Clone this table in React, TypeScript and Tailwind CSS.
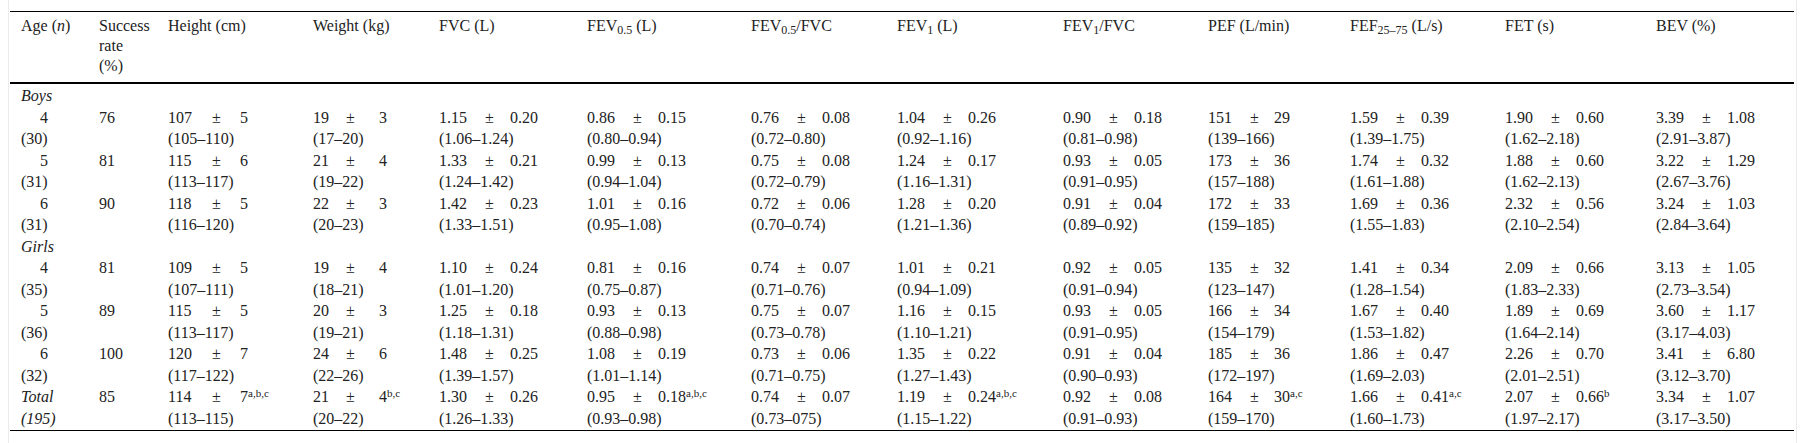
import React from "react";

type Cell = [string, string, string, string?];

const GRID =
  "grid grid-cols-[89px_69px_145px_126px_148px_164px_146px_166px_145px_142px_155px_151px_138px]";

const SUBW: [string, string][] = [
  ["w-[44px]", "w-[28px]"],
  ["w-[33px]", "w-[33px]"],
  ["w-[46px]", "w-[25px]"],
  ["w-[46px]", "w-[25px]"],
  ["w-[46px]", "w-[25px]"],
  ["w-[46px]", "w-[25px]"],
  ["w-[46px]", "w-[25px]"],
  ["w-[42px]", "w-[24px]"],
  ["w-[46px]", "w-[25px]"],
  ["w-[46px]", "w-[25px]"],
  ["w-[46px]", "w-[25px]"],
];

type Row = { age: string; n: string; rate: string; cells: Cell[]; italic?: boolean };

const boys: Row[] = [
  {
    age: "4",
    n: "(30)",
    rate: "76",
    cells: [
      ["107", "5", "(105–110)"],
      ["19", "3", "(17–20)"],
      ["1.15", "0.20", "(1.06–1.24)"],
      ["0.86", "0.15", "(0.80–0.94)"],
      ["0.76", "0.08", "(0.72–0.80)"],
      ["1.04", "0.26", "(0.92–1.16)"],
      ["0.90", "0.18", "(0.81–0.98)"],
      ["151", "29", "(139–166)"],
      ["1.59", "0.39", "(1.39–1.75)"],
      ["1.90", "0.60", "(1.62–2.18)"],
      ["3.39", "1.08", "(2.91–3.87)"],
    ],
  },
  {
    age: "5",
    n: "(31)",
    rate: "81",
    cells: [
      ["115", "6", "(113–117)"],
      ["21", "4", "(19–22)"],
      ["1.33", "0.21", "(1.24–1.42)"],
      ["0.99", "0.13", "(0.94–1.04)"],
      ["0.75", "0.08", "(0.72–0.79)"],
      ["1.24", "0.17", "(1.16–1.31)"],
      ["0.93", "0.05", "(0.91–0.95)"],
      ["173", "36", "(157–188)"],
      ["1.74", "0.32", "(1.61–1.88)"],
      ["1.88", "0.60", "(1.62–2.13)"],
      ["3.22", "1.29", "(2.67–3.76)"],
    ],
  },
  {
    age: "6",
    n: "(31)",
    rate: "90",
    cells: [
      ["118", "5", "(116–120)"],
      ["22", "3", "(20–23)"],
      ["1.42", "0.23", "(1.33–1.51)"],
      ["1.01", "0.16", "(0.95–1.08)"],
      ["0.72", "0.06", "(0.70–0.74)"],
      ["1.28", "0.20", "(1.21–1.36)"],
      ["0.91", "0.04", "(0.89–0.92)"],
      ["172", "33", "(159–185)"],
      ["1.69", "0.36", "(1.55–1.83)"],
      ["2.32", "0.56", "(2.10–2.54)"],
      ["3.24", "1.03", "(2.84–3.64)"],
    ],
  },
];

const girls: Row[] = [
  {
    age: "4",
    n: "(35)",
    rate: "81",
    cells: [
      ["109", "5", "(107–111)"],
      ["19", "4", "(18–21)"],
      ["1.10", "0.24", "(1.01–1.20)"],
      ["0.81", "0.16", "(0.75–0.87)"],
      ["0.74", "0.07", "(0.71–0.76)"],
      ["1.01", "0.21", "(0.94–1.09)"],
      ["0.92", "0.05", "(0.91–0.94)"],
      ["135", "32", "(123–147)"],
      ["1.41", "0.34", "(1.28–1.54)"],
      ["2.09", "0.66", "(1.83–2.33)"],
      ["3.13", "1.05", "(2.73–3.54)"],
    ],
  },
  {
    age: "5",
    n: "(36)",
    rate: "89",
    cells: [
      ["115", "5", "(113–117)"],
      ["20", "3", "(19–21)"],
      ["1.25", "0.18", "(1.18–1.31)"],
      ["0.93", "0.13", "(0.88–0.98)"],
      ["0.75", "0.07", "(0.73–0.78)"],
      ["1.16", "0.15", "(1.10–1.21)"],
      ["0.93", "0.05", "(0.91–0.95)"],
      ["166", "34", "(154–179)"],
      ["1.67", "0.40", "(1.53–1.82)"],
      ["1.89", "0.69", "(1.64–2.14)"],
      ["3.60", "1.17", "(3.17–4.03)"],
    ],
  },
  {
    age: "6",
    n: "(32)",
    rate: "100",
    cells: [
      ["120", "7", "(117–122)"],
      ["24", "6", "(22–26)"],
      ["1.48", "0.25", "(1.39–1.57)"],
      ["1.08", "0.19", "(1.01–1.14)"],
      ["0.73", "0.06", "(0.71–0.75)"],
      ["1.35", "0.22", "(1.27–1.43)"],
      ["0.91", "0.04", "(0.90–0.93)"],
      ["185", "36", "(172–197)"],
      ["1.86", "0.47", "(1.69–2.03)"],
      ["2.26", "0.70", "(2.01–2.51)"],
      ["3.41", "6.80", "(3.12–3.70)"],
    ],
  },
];

const total: Row = {
  age: "Total",
  n: "(195)",
  rate: "85",
  italic: true,
  cells: [
    ["114", "7", "(113–115)", "a,b,c"],
    ["21", "4", "(20–22)", "b,c"],
    ["1.30", "0.26", "(1.26–1.33)"],
    ["0.95", "0.18", "(0.93–0.98)", "a,b,c"],
    ["0.74", "0.07", "(0.73–075)"],
    ["1.19", "0.24", "(1.15–1.22)", "a,b,c"],
    ["0.92", "0.08", "(0.91–0.93)"],
    ["164", "30", "(159–170)", "a,c"],
    ["1.66", "0.41", "(1.60–1.73)", "a,c"],
    ["2.07", "0.66", "(1.97–2.17)", "b"],
    ["3.34", "1.07", "(3.17–3.50)"],
  ],
};

function DataRow({ row }: { row: Row }) {
  return (
    <div className={GRID}>
      <div className="pl-[11px]">
        {row.italic ? (
          <>
            <div className="italic">{row.age}</div>
            <div className="italic">{row.n}</div>
          </>
        ) : (
          <>
            <div className="pl-[19px]">{row.age}</div>
            <div>{row.n}</div>
          </>
        )}
      </div>
      <div>{row.rate}</div>
      {row.cells.map((c, i) => (
        <div key={i}>
          <div className="flex whitespace-nowrap">
            <span className={SUBW[i][0]}>{c[0]}</span>
            <span className={SUBW[i][1]}>±</span>
            <span>
              {c[1]}
              {c[3] ? <sup className="text-[11px]">{c[3]}</sup> : null}
            </span>
          </div>
          <div className="whitespace-nowrap">{c[2]}</div>
        </div>
      ))}
    </div>
  );
}

function Label({ text }: { text: string }) {
  return (
    <div className={GRID}>
      <div className="pl-[11px] italic">{text}</div>
    </div>
  );
}

export default function App() {
  const sub = "text-[12px]";
  return (
    <div className="h-[443px] w-[1805px] bg-white font-['Liberation_Serif',serif] text-[16px] text-[#222222]">
      <div className="ml-[8px] h-full w-[1789px] border-x border-[#ebebeb] pt-[11px]">
        <div className="ml-px w-[1784px] border-t border-b border-black">
          <div className={`${GRID} border-b-2 border-black pt-[4px] pb-[6px] leading-[20px]`}>
            <div className="pl-[11px]">
              Age (<span className="italic">n</span>)
            </div>
            <div>
              Success
              <br />
              rate
              <br />
              (%)
            </div>
            <div>Height (cm)</div>
            <div>Weight (kg)</div>
            <div>FVC (L)</div>
            <div>
              FEV<sub className={sub}>0.5</sub> (L)
            </div>
            <div>
              FEV<sub className={sub}>0.5</sub>/FVC
            </div>
            <div>
              FEV<sub className={sub}>1</sub> (L)
            </div>
            <div>
              FEV<sub className={sub}>1</sub>/FVC
            </div>
            <div>PEF (L/min)</div>
            <div>
              FEF<sub className={sub}>25–75</sub> (L/s)
            </div>
            <div>FET (s)</div>
            <div>BEV (%)</div>
          </div>
          <div className="pt-px pb-px leading-[21.5px]">
            <Label text="Boys" />
            {boys.map((r, i) => (
              <DataRow key={"b" + i} row={r} />
            ))}
            <Label text="Girls" />
            {girls.map((r, i) => (
              <DataRow key={"g" + i} row={r} />
            ))}
            <DataRow row={total} />
          </div>
        </div>
      </div>
    </div>
  );
}
